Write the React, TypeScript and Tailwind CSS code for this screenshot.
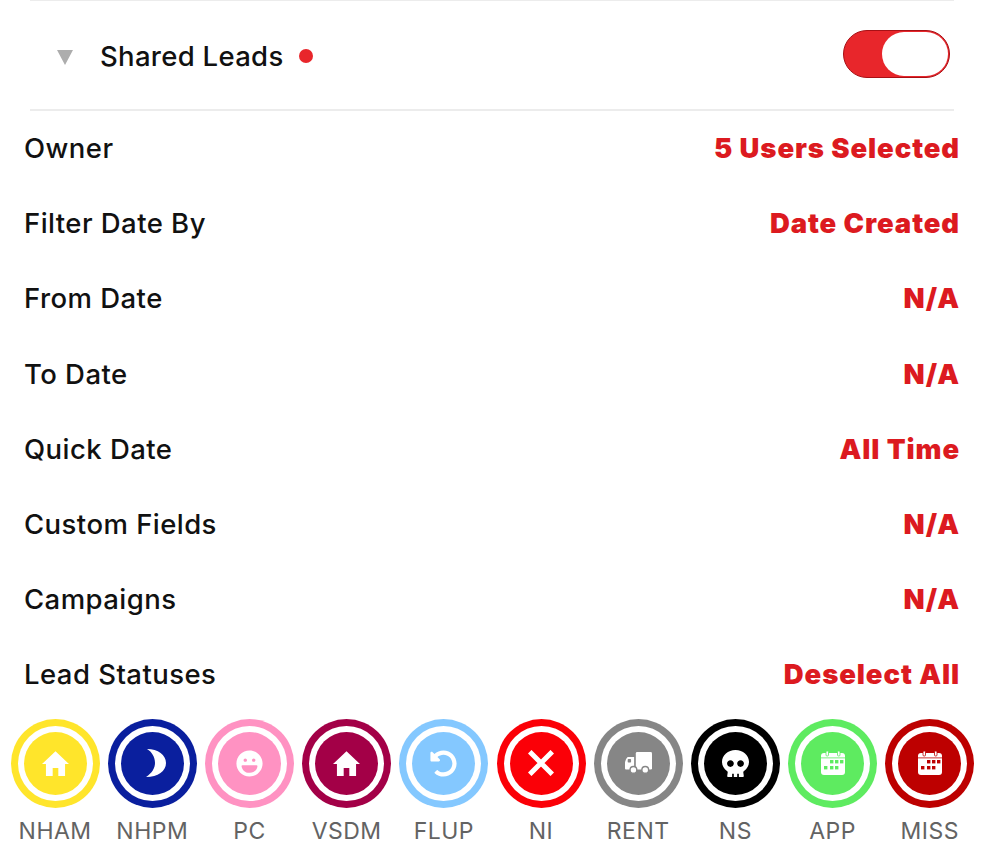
import { FaLaugh, FaUndoAlt, FaSkull } from "react-icons/fa";

const rows = [
  { label: "Owner", value: "5 Users Selected" },
  { label: "Filter Date By", value: "Date Created" },
  { label: "From Date", value: "N/A" },
  { label: "To Date", value: "N/A" },
  { label: "Quick Date", value: "All Time" },
  { label: "Custom Fields", value: "N/A" },
  { label: "Campaigns", value: "N/A" },
  { label: "Lead Statuses", value: "Deselect All" },
];

const HomeIcon = () => (
  <svg width="27" height="27" viewBox="0 0 24 24" fill="currentColor">
    <path d="M12 1 L24 12.5 H20.5 V23 H14.5 V16 H9.5 V23 H3.5 V12.5 H0 Z" />
  </svg>
);

const MoonIcon = () => (
  <svg width="21" height="28" viewBox="0 0 21 28" fill="currentColor" className="ml-[7px]">
    <path d="M2 0 C13 0 21 6 21 14 C21 22 13 28 1 28 C7 24 10 19 10 14 C10 8 7 3 2 0 Z" />
  </svg>
);

const CloseIcon = () => (
  <svg width="26" height="26" viewBox="0 0 26 26" stroke="currentColor" strokeWidth="5" strokeLinecap="square">
    <path d="M3.5 3.5 L22.5 22.5 M22.5 3.5 L3.5 22.5" />
  </svg>
);

const TruckIcon = ({ bg }: { bg: string }) => (
  <svg width="27" height="22" viewBox="0 0 80 65" fill="currentColor">
    <rect x="32" y="0" width="48" height="52" rx="4" />
    <path d="M0 30 Q0 22 8 15 H27 V52 H3 Q0 52 0 49 Z" />
    <rect x="8" y="21" width="10" height="10" rx="2" fill={bg} />
    <circle cx="25" cy="53" r="10" stroke={bg} strokeWidth="4" />
    <circle cx="60" cy="53" r="10" stroke={bg} strokeWidth="4" />
  </svg>
);

const CalendarIcon = ({ bg }: { bg: string }) => (
  <svg width="26" height="24" viewBox="0 0 26 24" fill="currentColor">
    <rect x="1" y="2" width="24" height="22" rx="3" />
    <rect x="6" y="0" width="2.5" height="5" rx="1" stroke={bg} strokeWidth="0.8" />
    <rect x="17.5" y="0" width="2.5" height="5" rx="1" stroke={bg} strokeWidth="0.8" />
    <rect x="1" y="6.5" width="24" height="0.8" fill={bg} />
    <rect x="10" y="9" width="3.4" height="3.4" fill={bg} />
    <rect x="15" y="9" width="3.4" height="3.4" fill={bg} />
    <rect x="20" y="9" width="3.4" height="3.4" fill={bg} />
    <rect x="4" y="15" width="3.4" height="3.4" fill={bg} />
    <rect x="10" y="15" width="3.4" height="3.4" fill={bg} />
    <rect x="15" y="15" width="3.4" height="3.4" fill={bg} />
  </svg>
);

const statuses = [
  { name: "NHAM", bg: "bg-[#ffe52b]", icon: <HomeIcon /> },
  { name: "NHPM", bg: "bg-[#0a1f9e]", icon: <MoonIcon /> },
  { name: "PC", bg: "bg-[#ff92c2]", icon: <FaLaugh size={27} /> },
  { name: "VSDM", bg: "bg-[#a30047]", icon: <HomeIcon /> },
  { name: "FLUP", bg: "bg-[#84c8ff]", icon: <FaUndoAlt size={27} /> },
  { name: "NI", bg: "bg-[#fb0007]", icon: <CloseIcon /> },
  { name: "RENT", bg: "bg-[#868686]", icon: <TruckIcon bg="#868686" /> },
  { name: "NS", bg: "bg-black", icon: <FaSkull size={27} /> },
  { name: "APP", bg: "bg-[#5eeb60]", icon: <CalendarIcon bg="#5eeb60" /> },
  { name: "MISS", bg: "bg-[#bd0000]", icon: <CalendarIcon bg="#bd0000" /> },
];

export default function App() {
  return (
    <div className="w-[986px] h-[856px] overflow-hidden bg-white font-['Inter',sans-serif]">
      {/* Shared leads header */}
      <div className="mx-[30px] w-[924px] h-[112px] border-y-2 border-[#ececec] flex items-center -mt-px">
        <div className="w-0 h-0 ml-[27px] border-x-[8px] border-x-transparent border-t-[15px] border-t-[#adadad] mt-[5px]" />
        <span className="ml-[27px] mt-[3px] text-[27.5px] font-medium text-[#111] tracking-[0.3px]">Shared Leads</span>
        <div className="ml-[15px] mt-[2px] w-[14px] h-[14px] rounded-full bg-[#e8262b]" />
        <div className="ml-auto mr-[4px] -mt-[2px] w-[107px] h-[48px] rounded-full bg-[#e8262b] border border-[#a81015] flex items-center justify-end pr-px">
          <div className="w-[66px] h-[44px] rounded-full bg-white" />
        </div>
      </div>

      {/* Filter rows */}
      <div className="pl-[24px] pr-[26px]">
        {rows.map((row) => (
          <div key={row.label} className="h-[75.2px] flex items-center justify-between">
            <span className="text-[27.5px] font-medium text-[#111] tracking-[0.45px]">{row.label}</span>
            <span className="text-[27.5px] font-black text-[#dc1a20] tracking-[0.9px]">{row.value}</span>
          </div>
        ))}
      </div>

      {/* Status bar */}
      <div className="mt-[6px] pl-[6.5px] flex">
        {statuses.map((s) => (
          <div key={s.name} className="w-[97.2px] flex flex-col items-center">
            <div className={`w-[89px] h-[89px] rounded-full flex items-center justify-center ${s.bg}`}>
              <div className="w-[75px] h-[75px] rounded-full bg-white flex items-center justify-center">
                <div className={`w-[63px] h-[63px] rounded-full flex items-center justify-center text-white ${s.bg}`}>
                  {s.icon}
                </div>
              </div>
            </div>
            <span className="mt-[6px] text-[23px] text-[#636363] tracking-[0.5px]">{s.name}</span>
          </div>
        ))}
      </div>
    </div>
  );
}
